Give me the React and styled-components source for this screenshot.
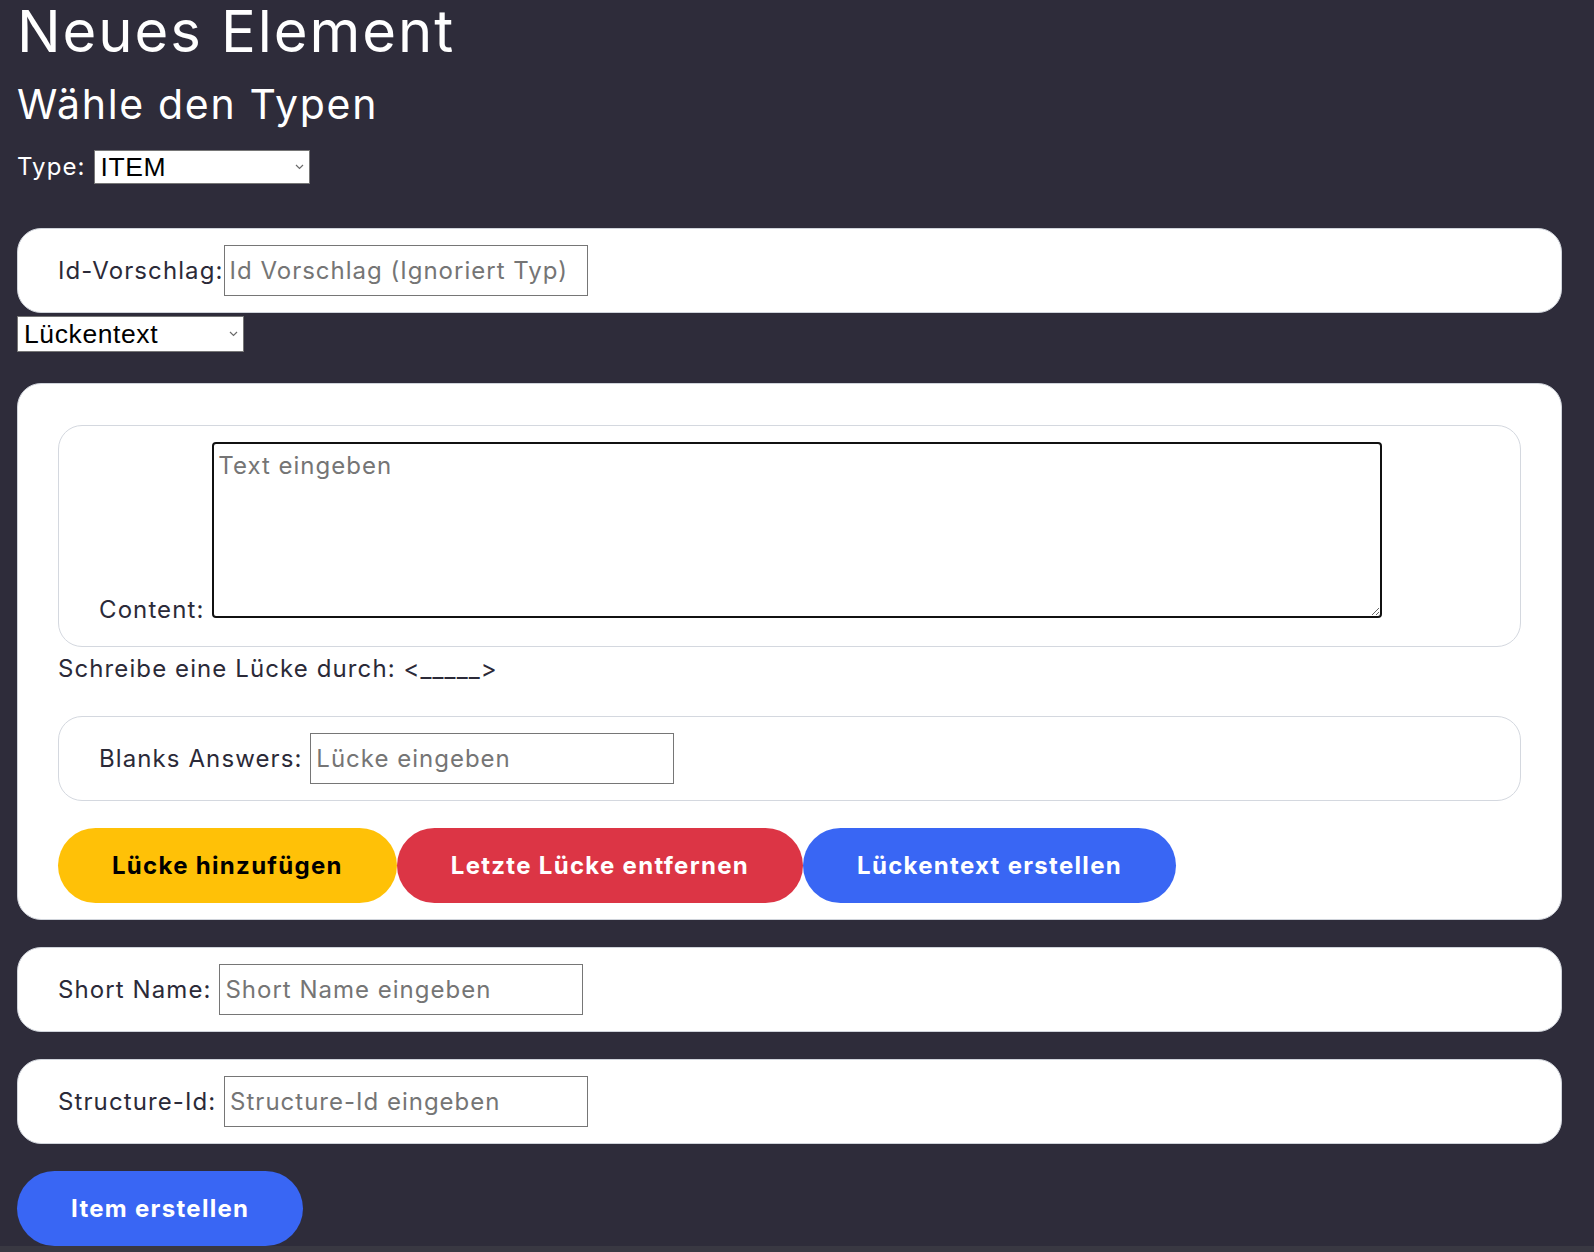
import React from 'react';
import styled, { createGlobalStyle } from 'styled-components';

const GlobalStyle = createGlobalStyle`
  html {
    background: #393842;
  }
  body {
    margin: 0;
    font-family: Inter, "Noto Sans", sans-serif;
  }
`;

const Page = styled.div`
  background: #2e2c3a;
  padding: 0 32px 0 17px;
  color: #ffffff;
`;

const Title = styled.h1`
  margin: 0;
  font-size: 58px;
  font-weight: 400;
  line-height: 1.1;
  letter-spacing: 0.033em;
`;

const Subtitle = styled.h2`
  margin: 16px 0 0;
  font-size: 41px;
  font-weight: 400;
  line-height: 1.2;
  letter-spacing: 0.041em;
`;

const TypeRow = styled.div`
  display: flex;
  align-items: center;
  gap: 8px;
  margin-top: 21px;
  font-size: 24px;
  letter-spacing: 1.1px;
`;

const SelectWrap = styled.div`
  position: relative;
  display: inline-block;
  width: ${(p) => p.$width}px;
  margin-top: ${(p) => p.$mt || 0}px;
`;

const Select = styled.select`
  appearance: none;
  display: block;
  width: 100%;
  height: ${(p) => p.$height}px;
  box-sizing: border-box;
  margin: 0;
  padding: 0 20px 0 6px;
  border: 1px solid #767676;
  border-radius: 0;
  background: #ffffff;
  color: #000000;
  font-family: "Liberation Sans", Arial, sans-serif;
  font-size: 26.5px;
  letter-spacing: 0.6px;
  outline: none;
`;

const Chevron = styled.svg`
  position: absolute;
  right: 6px;
  top: 50%;
  margin-top: -3px;
  pointer-events: none;
`;

const Card = styled.div`
  margin-top: ${(p) => p.$mt}px;
  background: #ffffff;
  border: 1px solid #cfd3da;
  border-radius: 24px;
  padding: 16px 40px;
  font-size: 24px;
  line-height: normal;
  letter-spacing: 1.1px;
  color: #2b2a38;
`;

const InnerCard = styled.div`
  margin-top: ${(p) => p.$mt || 0}px;
  border: 1px solid #d4d8df;
  border-radius: 24px;
  padding: 16px 40px ${(p) => p.$pb || 16}px;
`;

const Label = styled.label`
  white-space: pre;
`;

const TextInput = styled.input`
  box-sizing: border-box;
  width: 364px;
  height: 51px;
  margin: 0;
  padding: 0 5px;
  border: 1px solid #767676;
  font-family: Inter, "Noto Sans", sans-serif;
  font-size: 24px;
  letter-spacing: 1px;
  color: #2b2a38;
  vertical-align: baseline;
  &::placeholder {
    color: #757575;
  }
`;

const TextArea = styled.textarea`
  box-sizing: border-box;
  width: 1170px;
  height: 176px;
  margin: 0;
  padding: 7px 4px;
  border: 2px solid #111111;
  border-radius: 4px;
  font-family: Inter, "Noto Sans", sans-serif;
  font-size: 24px;
  letter-spacing: 1px;
  line-height: 1.25;
  vertical-align: baseline;
  outline: none;
  &::placeholder {
    color: #757575;
  }
`;

const Hint = styled.p`
  margin: 7px 0 33px;
`;

const ButtonRow = styled.div`
  display: flex;
  margin-top: 27px;
`;

const tones = {
  yellow: { bg: '#ffc107', fg: '#000000' },
  red: { bg: '#dc3545', fg: '#ffffff' },
  blue: { bg: '#3966f4', fg: '#ffffff' },
};

const Button = styled.button`
  height: 75px;
  margin: ${(p) => p.$mt || 0}px 0 0;
  padding: 0 54px;
  border: none;
  border-radius: 38px;
  background: ${(p) => tones[p.$tone].bg};
  color: ${(p) => tones[p.$tone].fg};
  font-family: Inter, "Noto Sans", sans-serif;
  font-size: 24px;
  font-weight: 700;
  letter-spacing: 1.3px;
  cursor: pointer;
`;

const Footer = styled.div`
  display: flex;
`;

const ChevronIcon = () => (
  <Chevron width="9" height="6" viewBox="0 0 9 6">
    <path d="M1 1l3.5 3.5L8 1" fill="none" stroke="#6b6b6b" strokeWidth="1.2" />
  </Chevron>
);

export default function App() {
  return (
    <>
      <GlobalStyle />
      <Page>
        <Title>Neues Element</Title>
        <Subtitle>Wähle den Typen</Subtitle>
        <TypeRow>
          <span>Type:</span>
          <SelectWrap $width={216}>
            <Select $height={34} defaultValue="ITEM">
              <option>ITEM</option>
              <option>STRUCTURE</option>
            </Select>
            <ChevronIcon />
          </SelectWrap>
        </TypeRow>

        <Card $mt={44}>
          <Label>Id-Vorschlag:</Label>
          <TextInput placeholder="Id Vorschlag (Ignoriert Typ)" />
        </Card>

        <SelectWrap $width={227} $mt={3}>
          <Select $height={36} defaultValue="Lückentext">
            <option>Lückentext</option>
            <option>Multiple Choice</option>
          </Select>
          <ChevronIcon />
        </SelectWrap>

        <Card $mt={31}>
          <InnerCard $mt={25} $pb={22}>
            <Label>Content: </Label>
            <TextArea placeholder="Text eingeben" />
          </InnerCard>
          <Hint>Schreibe eine Lücke durch: &lt;_____&gt;</Hint>
          <InnerCard>
            <Label>Blanks Answers: </Label>
            <TextInput placeholder="Lücke eingeben" />
          </InnerCard>
          <ButtonRow>
            <Button $tone="yellow">Lücke hinzufügen</Button>
            <Button $tone="red">Letzte Lücke entfernen</Button>
            <Button $tone="blue">Lückentext erstellen</Button>
          </ButtonRow>
        </Card>

        <Card $mt={27}>
          <Label>Short Name: </Label>
          <TextInput placeholder="Short Name eingeben" />
        </Card>

        <Card $mt={27}>
          <Label>Structure-Id: </Label>
          <TextInput placeholder="Structure-Id eingeben" />
        </Card>

        <Footer>
          <Button $tone="blue" $mt={27}>Item erstellen</Button>
        </Footer>
      </Page>
    </>
  );
}
